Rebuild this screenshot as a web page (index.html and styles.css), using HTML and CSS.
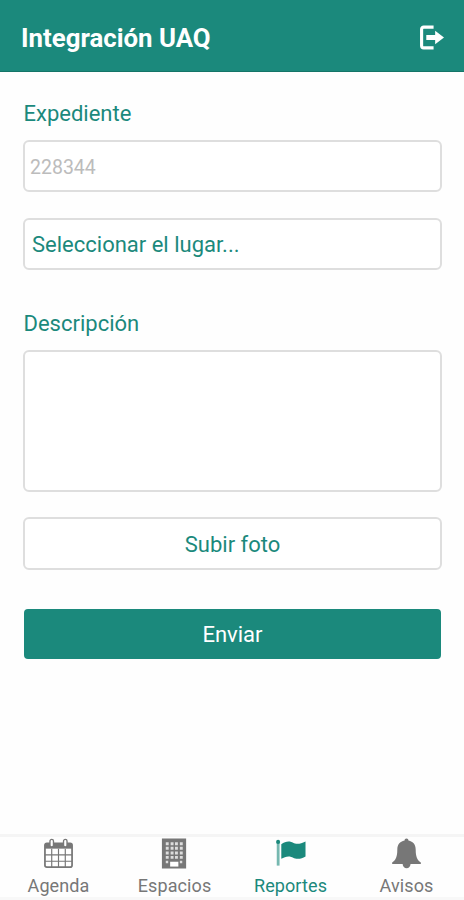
FILE: index.html
```
<!DOCTYPE html>
<html lang="es">
<head>
	<meta charset="UTF-8">
	<title>Integración UAQ</title>
	<link rel="stylesheet" href="styles.css">
</head>
<body>
	<header class="header">
		<h1 class="title">Integración UAQ</h1>
		<svg class="logout" viewBox="0 0 24 24">
			<path d="M14 2H4.500a2 2 0 0 0-2 2v16a2 2 0 0 0 2 2H14" fill="none" stroke="#fff" stroke-width="3"/>
			<path d="M7 9.500h8.500V5.500L24 12l-8.500 6.500v-4H7z" fill="#fff"/>
		</svg>
	</header>
	<form class="form">
		<label class="label" for="expediente">Expediente</label>
		<input class="field expediente" id="expediente" type="text" value="228344" readonly>
		<select class="field lugar">
			<option>Seleccionar el lugar...</option>
		</select>
		<label class="label" for="descripcion">Descripción</label>
		<textarea class="field descripcion" id="descripcion"></textarea>
		<button class="field foto" type="button">Subir foto</button>
		<button class="enviar" type="button">Enviar</button>
	</form>
	<nav class="tabs">
		<a class="tab">
			<svg class="icon" viewBox="0 0 32 32">
				<path d="M4 5.5h24q2 0 2 2V28q0 2-2 2H4q-2 0-2-2V7.5q0-2 2-2z" fill="#fff" stroke="currentColor" stroke-width="1.8"/>
				<path d="M2 6h28v5H2z" fill="currentColor"/>
				<path d="M9 11v19M16 11v19M23 11v19M2 17.5h28M2 24h28" fill="none" stroke="currentColor" stroke-width="1.2"/>
				<rect x="7.2" y="1.4" width="3.6" height="7.8" rx="1.8" fill="#fff" stroke="currentColor" stroke-width="1.4"/>
				<rect x="21.2" y="1.4" width="3.6" height="7.8" rx="1.8" fill="#fff" stroke="currentColor" stroke-width="1.4"/>
			</svg>
			<span class="tab_name">Agenda</span>
		</a>
		<a class="tab">
			<svg class="icon" viewBox="0 0 32 32">
				<path d="M3 .5h25v31H3z" fill="currentColor"/>
				<g fill="#fff">
					<path d="M7 4.500h3v3H7zM12 4.500h3v3h-3zM16.500 4.500h3v3h-3zM21.500 4.500h3v3h-3zM7 9h3v3H7zM12 9h3v3h-3zM16.500 9h3v3h-3zM21.500 9h3v3h-3z" opacity=".75"/>
					<path d="M7 14h3v3H7zM12 14h3v3h-3zM16.500 14h3v3h-3zM21.500 14h3v3h-3zM7 18.500h3v3H7zM12 18.500h3v3h-3zM16.500 18.500h3v3h-3zM21.500 18.500h3v3h-3zM7 23.500h2.500V26H7zM21.500 23.500H24V26h-2.500z" opacity=".75"/>
					<path d="M11.500 24.500h8.500v5h-8.500z"/>
				</g>
			</svg>
			<span class="tab_name">Espacios</span>
		</a>
		<a class="tab active">
			<svg class="icon" viewBox="0 0 32 32">
				<path d="M1.8 5h2.9v23.5H1.8z" fill="currentColor" opacity=".6"/>
				<circle cx="3.2" cy="4" r="2.1" fill="currentColor"/>
				<path d="M6.500 6.500C9 4.300 11.500 3.500 14 3.500c4 0 5.500 2.500 9 2.500 3 0 5-1.200 8.500-2.500v15.500c-2.800 1.400-4.800 2.500-8 2.500-4 0-5.500-2.500-9.500-2.500-2.700 0-5 1-7.500 2.500z" fill="currentColor"/>
			</svg>
			<span class="tab_name">Reportes</span>
		</a>
		<a class="tab">
			<svg class="icon" viewBox="0 0 32 32">
				<path d="M16 .5c1.300 0 2 .8 2 2.200 5 1 7.500 4.500 7.500 9.300 0 7 1.500 10.500 5.300 13.200v1.600H1.200v-1.600C5 22.500 6.500 19 6.500 12c0-4.800 2.500-8.300 7.500-9.300 0-1.400.7-2.200 2-2.200z" fill="currentColor"/>
				<path d="M12 26.500h8.200a4.100 4.700 0 0 1-8.200 0z" fill="currentColor"/>
			</svg>
			<span class="tab_name">Avisos</span>
		</a>
	</nav>
</body>
</html>
```
FILE: styles.css
```
*{
	box-sizing: border-box;
}
body{
	display: flex;
	flex-direction: column;
	height: 900px;
	margin: 0;
	background: #fefefe;
	color: #1b897c;
	font-family: Roboto, "Liberation Sans", sans-serif;
}
.header{
	display: flex;
	justify-content: space-between;
	align-items: center;
	height: 72px;
	padding: 4px 20px 0 21px;
	background: #1b897c;
	border-bottom: 1px solid #147568;
}
.title{
	margin: 0;
	color: #fff;
	font-size: 25.8px;
	font-weight: 700;
}
.logout{
	width: 25px;
	height: 25px;
	margin-bottom: 1px;
}
.form{
	display: flex;
	flex-direction: column;
	flex: 1;
	padding: 29px 22px 0 23px;
}
.label{
	height: 26px;
	margin: 0 0 13px .5px;
	font-size: 22px;
	line-height: 26px;
}
.field{
	height: 52px;
	margin: 0;
	padding: 0 7px;
	border: 2px solid #dedede;
	border-radius: 6px;
	background: #fff;
	color: #1b897c;
	font-family: inherit;
	font-size: 22px;
	outline: none;
}
.expediente{
	margin-bottom: 26px;
	padding: 2px 5px 0;
	color: #bcbcbc;
	font-size: 19.5px;
}
.lugar{
	margin-bottom: 41px;
	appearance: none;
}
.descripcion{
	height: 142px;
	margin-bottom: 25px;
	resize: none;
}
.foto{
	height: 53px;
	margin-bottom: 39px;
	padding-top: 2px;
}
.enviar{
	height: 50px;
	margin: 0 1px;
	padding-top: 2px;
	border: none;
	border-radius: 4px;
	background: #1b897c;
	color: #fff;
	font-family: inherit;
	font-size: 22px;
}
.tabs{
	display: flex;
	height: 66px;
	border-top: 3px solid #f5f5f5;
	border-bottom: 3px solid #f8f8f8;
	background: #fefefe;
}
.tab{
	display: flex;
	flex-direction: column;
	align-items: center;
	flex: 1;
	padding: 1px 0 0 1px;
	color: #777;
}
.active{
	color: #1b897c;
}
.icon{
	width: 31px;
	height: 31px;
}
.tab_name{
	margin-top: 6px;
	font-size: 18px;
	line-height: 22px;
	letter-spacing: .1px;
}
```
